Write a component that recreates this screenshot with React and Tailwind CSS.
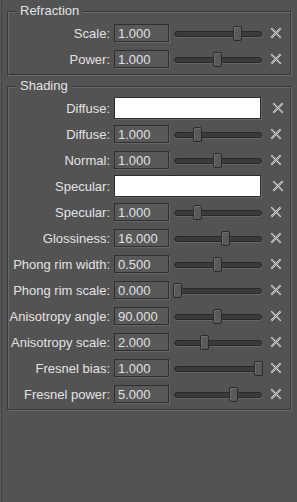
import React from "react";

const refraction = [
  { label: "Scale:", value: "1.000", pos: 60 },
  { label: "Power:", value: "1.000", pos: 40 },
];

const shading = [
  { label: "Diffuse:", color: true },
  { label: "Diffuse:", value: "1.000", pos: 20 },
  { label: "Normal:", value: "1.000", pos: 40 },
  { label: "Specular:", color: true },
  { label: "Specular:", value: "1.000", pos: 20 },
  { label: "Glossiness:", value: "16.000", pos: 48 },
  { label: "Phong rim width:", value: "0.500", pos: 40 },
  { label: "Phong rim scale:", value: "0.000", pos: 0 },
  { label: "Anisotropy angle:", value: "90.000", pos: 40 },
  { label: "Anisotropy scale:", value: "2.000", pos: 27 },
  { label: "Fresnel bias:", value: "1.000", pos: 81 },
  { label: "Fresnel power:", value: "5.000", pos: 56 },
];

function XIcon({ id }) {
  const d = "M2 2 L10 10 M10 2 L2 10";
  return (
    <svg width="12" height="12" viewBox="0 0 12 12" className="block">
      <defs>
        <pattern id={id} width="2" height="2" patternUnits="userSpaceOnUse">
          <rect width="2" height="2" fill="#858585" />
          <rect width="1" height="1" fill="#d4d4d4" />
          <rect x="1" y="1" width="1" height="1" fill="#d4d4d4" />
        </pattern>
      </defs>
      <path d={d} stroke="#3e3e3e" strokeWidth="3.6" strokeLinecap="square" opacity="0.45" />
      <path d={d} stroke={`url(#${id})`} strokeWidth="2.4" strokeLinecap="square" />
    </svg>
  );
}

function Slider({ pos }) {
  return (
    <div className="relative ml-[4px] h-[17px] w-[90px]">
      <div className="absolute left-[1px] right-[1px] top-[6px] h-[6px] rounded-full border border-[#2a2a2a] bg-[#3b3b3b] shadow-[0_1px_0_#656565]" />
      <div
        className="absolute top-[1px] h-[15px] w-[9px] rounded-[2px] border border-[#2b2b2b] bg-[#595959] shadow-[inset_1px_1px_0_#6e6e6e]"
        style={{ left: pos }}
      />
    </div>
  );
}

function Row({ row, id }) {
  return (
    <div className="flex h-[26px] items-center">
      <div className="w-[102px] shrink-0 text-right text-[13px] leading-none text-[#e2e2e2]">
        {row.label}
      </div>
      {row.color ? (
        <div className="ml-[4px] h-[22px] w-[147px] border border-[#2c2c2c] bg-white shadow-[1px_1px_0_#666]" />
      ) : (
        <>
          <div className="ml-[4px] flex h-[18px] w-[55px] items-center border border-[#2f2f2f] bg-[#595959] pl-[3px] text-[13px] leading-none text-[#e0e0e0] shadow-[1px_1px_0_#666]">
            {row.value}
          </div>
          <Slider pos={row.pos} />
        </>
      )}
      <div className={row.color ? "ml-[11px]" : "ml-[7px]"}>
        <XIcon id={id} />
      </div>
    </div>
  );
}

function Group({ title, rows, className, prefix }) {
  return (
    <div
      className={`relative ml-[7px] mr-[6px] border border-[#383838] pb-[2px] pt-[8px] shadow-[inset_1px_1px_0_#696969,1px_1px_0_#696969] ${className}`}
    >
      <div className="absolute left-[8px] top-[-9px] bg-[#535353] px-[4px] text-[13px] leading-[16px] text-[#e2e2e2]">
        {title}
      </div>
      {rows.map((r, i) => (
        <Row key={i} row={r} id={`${prefix}${i}`} />
      ))}
    </div>
  );
}

export default function App() {
  return (
    <div
      className="h-[502px] w-[297px] overflow-hidden bg-[#535353] pt-[11px] shadow-[inset_1px_0_0_#5a5a5a,inset_2px_0_0_#444444]"
      style={{ fontFamily: '"Liberation Sans", Arial, sans-serif' }}
    >
      <Group title="Refraction" rows={refraction} prefix="r" className="" />
      <Group title="Shading" rows={shading} prefix="s" className="mt-[11px]" />
    </div>
  );
}
